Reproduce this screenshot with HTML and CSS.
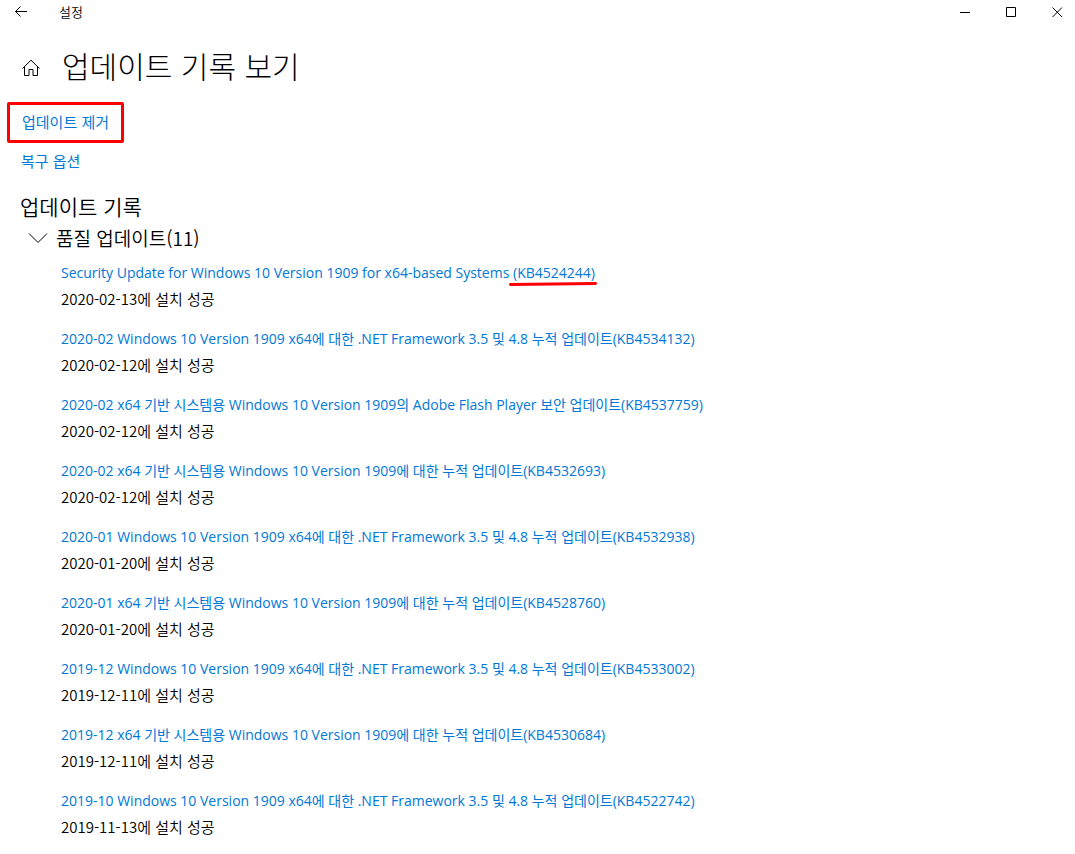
FILE: index.html
```
<!DOCTYPE html>
<html lang="ko">
<head>
    <meta charset="UTF-8">
    <meta name="viewport" content="width=device-width, initial-scale=1.0">
    <title>설정</title>
    <link rel="stylesheet" href="styles.css">
</head>
<body>
    <header class="titlebar">
        <button class="back" aria-label="뒤로">
            <svg width="14" height="12" viewBox="0 0 14 12"><path d="M13 5.500H1.500M6.500 .5L1.500 5.500L6.500 10.500"/></svg>
        </button>
        <span class="app-name">설정</span>
        <div class="window-buttons">
            <button aria-label="최소화">
                <svg width="11" height="11" viewBox="0 0 11 11"><path d="M0 5.500H10"/></svg>
            </button>
            <button aria-label="최대화">
                <svg width="11" height="11" viewBox="0 0 11 11"><path d="M.5 .5H9.500V9.500H.5Z"/></svg>
            </button>
            <button aria-label="닫기">
                <svg width="11" height="11" viewBox="0 0 11 11"><path d="M.5 .5L10 10M10 .5L.5 10"/></svg>
            </button>
        </div>
    </header>

    <main>
        <div class="page-title">
            <button class="home" aria-label="홈">
                <svg width="18" height="18" viewBox="0 0 18 18"><path d="M.5 9.500L9 1.200L17.500 9.500M2.500 8V16.500H7V10.500H11V16.500H15.500V8"/></svg>
            </button>
            <h1>업데이트 기록 보기</h1>
        </div>

        <nav class="actions">
            <a class="marked" href="#">업데이트 제거</a>
            <a href="#">복구 옵션</a>
        </nav>

        <h2>업데이트 기록</h2>
        <button class="group-toggle" aria-expanded="true">
            <svg width="20" height="12" viewBox="0 0 20 12"><path d="M1 1.500L10 10.500L19 1.500"/></svg>
            품질 업데이트(11)
        </button>

        <ul class="updates">
            <li>
                <a href="#">Security Update for Windows 10 Version 1909 for x64-based Systems <span class="kb">(KB4524244)<svg class="underline" width="88" height="6" viewBox="0 0 88 6"><path d="M1.500 3.500L44 3L86.500 2.500"/></svg></span></a>
                <p>2020-02-13에 설치 성공</p>
            </li>
            <li>
                <a href="#">2020-02 Windows 10 Version 1909 x64에 대한 .NET Framework 3.5 및 4.8 누적 업데이트(KB4534132)</a>
                <p>2020-02-12에 설치 성공</p>
            </li>
            <li>
                <a href="#">2020-02 x64 기반 시스템용 Windows 10 Version 1909의 Adobe Flash Player 보안 업데이트(KB4537759)</a>
                <p>2020-02-12에 설치 성공</p>
            </li>
            <li>
                <a href="#">2020-02 x64 기반 시스템용 Windows 10 Version 1909에 대한 누적 업데이트(KB4532693)</a>
                <p>2020-02-12에 설치 성공</p>
            </li>
            <li>
                <a href="#">2020-01 Windows 10 Version 1909 x64에 대한 .NET Framework 3.5 및 4.8 누적 업데이트(KB4532938)</a>
                <p>2020-01-20에 설치 성공</p>
            </li>
            <li>
                <a href="#">2020-01 x64 기반 시스템용 Windows 10 Version 1909에 대한 누적 업데이트(KB4528760)</a>
                <p>2020-01-20에 설치 성공</p>
            </li>
            <li>
                <a href="#">2019-12 Windows 10 Version 1909 x64에 대한 .NET Framework 3.5 및 4.8 누적 업데이트(KB4533002)</a>
                <p>2019-12-11에 설치 성공</p>
            </li>
            <li>
                <a href="#">2019-12 x64 기반 시스템용 Windows 10 Version 1909에 대한 누적 업데이트(KB4530684)</a>
                <p>2019-12-11에 설치 성공</p>
            </li>
            <li>
                <a href="#">2019-10 Windows 10 Version 1909 x64에 대한 .NET Framework 3.5 및 4.8 누적 업데이트(KB4522742)</a>
                <p>2019-11-13에 설치 성공</p>
            </li>
        </ul>
    </main>
</body>
</html>
```
FILE: styles.css
```
* {
    box-sizing: border-box;
}
body {
    margin: 0;
    background-color: #fff;
    color: #000;
    font-family: "Noto Sans CJK KR", sans-serif;
    font-size: 15px;
    line-height: 20px;
}
h1, h2, p, ul {
    margin: 0;
    padding: 0;
    font-weight: normal;
}
button {
    display: flex;
    align-items: center;
    justify-content: center;
    padding: 0;
    border: none;
    background: none;
    color: inherit;
    font: inherit;
}
svg {
    fill: none;
    stroke: #000;
}
a {
    color: #0078d7;
    text-decoration: none;
}
.titlebar {
    display: flex;
    align-items: center;
    height: 24px;
}
.back {
    width: 42px;
    height: 24px;
}
.app-name {
    margin-left: 17px;
    font-size: 13px;
    font-weight: 350;
}
.window-buttons {
    display: flex;
    margin-left: auto;
}
.window-buttons button {
    width: 46px;
    height: 24px;
}
.window-buttons button:last-child {
    justify-content: flex-end;
    width: 41px;
    padding-right: 12px;
}
main {
    padding: 21px 20px 16px;
}
.page-title {
    display: flex;
    align-items: center;
    gap: 20px;
    height: 40px;
}
.home {
    width: 22px;
    height: 40px;
    padding-top: 6px;
}
h1 {
    font-size: 30px;
    font-weight: 300;
    line-height: 40px;
}
.actions {
    display: flex;
    flex-direction: column;
    align-items: flex-start;
    gap: 8px;
    margin-top: 17px;
}
.actions a {
    padding: 0 1px;
}
.actions .marked {
    margin-left: -13px;
    padding: 7px 12px 8px;
    border: 3px solid #f00;
    border-radius: 2px;
}
h2 {
    margin-top: 23px;
    font-size: 21px;
    font-weight: 350;
    line-height: 24px;
}
.group-toggle {
    gap: 8px;
    margin-top: 6px;
    padding-left: 8px;
    font-size: 19px;
    font-weight: 350;
    line-height: 28px;
}
.updates {
    margin-top: 11px;
    padding-left: 41px;
    list-style: none;
}
.updates li {
    margin-bottom: 20px;
}
.updates a {
    display: block;
    font-family: "Open Sans", "Noto Sans CJK KR", sans-serif;
    font-size: 14px;
}
.updates p {
    margin-top: 6px;
    font-weight: 350;
}
.kb {
    position: relative;
}
.underline {
    position: absolute;
    left: -4px;
    bottom: -5px;
    stroke: #f00;
    stroke-width: 3;
    stroke-linecap: round;
}
```
